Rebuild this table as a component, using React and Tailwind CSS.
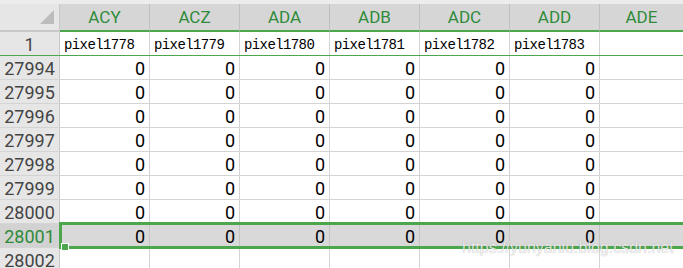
import React from 'react';

const cols = ['ACY', 'ACZ', 'ADA', 'ADB', 'ADC', 'ADD'];
const names = ['pixel1778', 'pixel1779', 'pixel1780', 'pixel1781', 'pixel1782', 'pixel1783'];
const rows = [27994, 27995, 27996, 27997, 27998, 27999, 28000];

function RowHead({ children, selected }) {
  return (
    <div
      className={`w-[60px] shrink-0 h-full flex items-center justify-center pt-[3px] border-r border-[#c8c8c8] text-[18px] ${
        selected ? 'bg-[#d2d2d2] text-[#2f8b3a]' : 'bg-[#e6e6e6] text-[#444444]'
      }`}
    >
      {children}
    </div>
  );
}

function ZeroRow({ label }) {
  return (
    <div className="flex h-[24px] border-b border-[#d4d4d4]">
      <RowHead>{label}</RowHead>
      {cols.map((c) => (
        <div key={c} className="w-[90px] shrink-0 h-full flex items-center justify-end pr-[4px] pt-[3px] border-r border-[#d4d4d4] text-[18px] text-black">
          0
        </div>
      ))}
      <div className="flex-1" />
    </div>
  );
}

export default function App() {
  return (
    <div className="w-[683px] h-[268px] overflow-hidden bg-white relative font-['Roboto',sans-serif] leading-none">
      <div className="h-[4px] bg-[#ececec]" />

      {/* column headers */}
      <div className="flex h-[28px]">
        <div className="w-[60px] shrink-0 bg-[#e6e6e6] border-r border-[#c8c8c8] border-b-2 border-b-[#c8c8c8] flex items-center justify-end pr-[5px]">
          <svg width="14" height="14" viewBox="0 0 14 14">
            <polygon points="14,0 14,14 0,14" fill="#bcbcbc" />
          </svg>
        </div>
        {cols.map((c) => (
          <div key={c} className="w-[90px] shrink-0 bg-[#d6d6d6] border-r border-[#bfbfbf] border-b-2 border-b-[#4ca64c] flex items-center justify-center pt-[1px] text-[17px] text-[#2f8b3a]">
            {c}
          </div>
        ))}
        <div className="flex-1 bg-[#d6d6d6] border-b-2 border-b-[#4ca64c] flex items-center justify-center pt-[1px] text-[17px] text-[#2f8b3a]">
          ADE
        </div>
      </div>

      {/* row 1 */}
      <div className="flex h-[24px] border-b border-[#4ca64c]">
        <RowHead>1</RowHead>
        {names.map((n) => (
          <div key={n} className="w-[90px] shrink-0 h-full flex items-center pl-[4px] pt-[2px] border-r border-[#d4d4d4] font-['Liberation_Mono',monospace] text-[14px] tracking-[-0.6px] text-black">
            {n}
          </div>
        ))}
        <div className="flex-1" />
      </div>

      {rows.map((r) => (
        <ZeroRow key={r} label={r} />
      ))}

      {/* selected row */}
      <div className="relative flex h-[24px] border-b border-[#d4d4d4] bg-[#d9d9d9]">
        <RowHead selected>28001</RowHead>
        {cols.map((c) => (
          <div key={c} className="w-[90px] shrink-0 h-full flex items-center justify-end pr-[4px] pt-[3px] border-r border-[#c4c4c4] text-[18px] text-black">
            0
          </div>
        ))}
        <div className="flex-1" />
        <div className="absolute left-[59px] -right-[4px] -top-[2px] -bottom-[2px] border-[3px] border-[#4ca64c]" />
        <div className="absolute left-[62px] -bottom-[3px] w-[6px] h-[6px] bg-[#4ca64c] outline outline-1 outline-white" />
      </div>

      <div className="flex h-[24px] border-b border-[#d4d4d4]">
        <RowHead>28002</RowHead>
        {cols.map((c) => (
          <div key={c} className="w-[90px] shrink-0 h-full border-r border-[#d4d4d4]" />
        ))}
        <div className="flex-1" />
      </div>

      <div className="absolute left-[462px] top-[240px] font-['Liberation_Sans',sans-serif] text-[16px] text-white/80 [text-shadow:0_0_1px_rgba(0,0,0,0.35)]">
        https://yunyaniu.blog.csdn.net
      </div>
    </div>
  );
}
